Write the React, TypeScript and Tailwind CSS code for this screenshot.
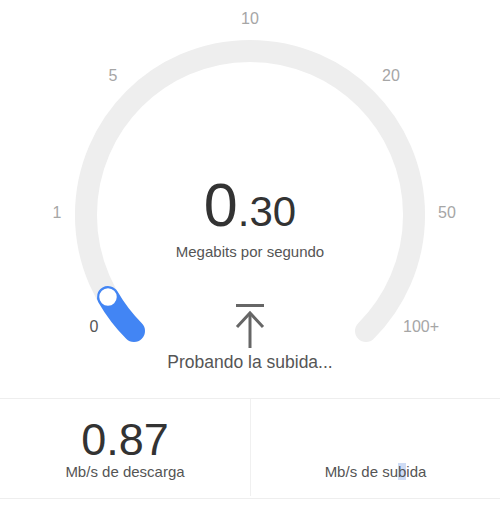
import React from 'react';

const dialLabels = [
  { text: '0', x: 94, y: 327, active: true },
  { text: '1', x: 57, y: 213 },
  { text: '5', x: 113, y: 76 },
  { text: '10', x: 250, y: 19 },
  { text: '20', x: 391, y: 76 },
  { text: '50', x: 447, y: 213 },
  { text: '100+', x: 421, y: 327 },
];

const Gauge: React.FC = () => {
  return (
    <div className="relative h-[398px]">
      <svg className="absolute inset-0" width="500" height="398" viewBox="0 0 500 398">
        <path
          d="M 134 331 A 164 164 0 1 1 366 331"
          fill="none"
          stroke="#eeeeee"
          strokeWidth="22"
          strokeLinecap="round"
        />
        <path
          d="M 134 331 A 164 164 0 0 1 108 297"
          fill="none"
          stroke="#4285f4"
          strokeWidth="22"
          strokeLinecap="round"
        />
        <circle cx="108" cy="297" r="9.5" fill="#ffffff" stroke="#4285f4" strokeWidth="1.5" />
      </svg>

      {dialLabels.map((l) => (
        <span
          key={l.text}
          className={`absolute -translate-x-1/2 -translate-y-1/2 text-[16px] leading-none ${l.active ? 'text-[#555555]' : 'text-[#a6a6a6]'}`}
          style={{ left: l.x, top: l.y }}
        >
          {l.text}
        </span>
      ))}

      <div className="relative flex flex-col items-center pt-[175px]">
        <div className="text-[61px] leading-none text-[#333333]">
          0<span className="text-[42px]">.30</span>
        </div>
        <div className="mt-[8px] text-[15px] leading-none text-[#555555]">Megabits por segundo</div>
        <svg className="mt-[43px]" width="30" height="46" viewBox="0 0 30 46">
          <g stroke="#666666" strokeWidth="3" fill="none">
            <line x1="1" y1="3.5" x2="29" y2="3.5" />
            <line x1="15" y1="11" x2="15" y2="46" />
            <polyline points="2,25 15,11 28,25" />
          </g>
        </svg>
        <div className="mt-[6px] text-[17.5px] leading-none text-[#555555]">Probando la subida...</div>
      </div>
    </div>
  );
};

const App: React.FC = () => {
  return (
    <div className="w-[500px] h-[506px] bg-white overflow-hidden font-['Liberation_Sans',Arial,sans-serif]">
      <Gauge />
      <div className="grid grid-cols-2 h-[101px] border-t border-b border-[#eeeeee]">
        <div className="flex flex-col items-center pt-[21px]">
          <div className="text-[45px] leading-[40px] text-[#333333]">0.87</div>
          <div className="mt-[4px] text-[15px] leading-none text-[#555555]">Mb/s de descarga</div>
        </div>
        <div className="flex flex-col items-center pt-[21px] border-l border-[#f0f0f0] mb-[2px]">
          <div className="text-[45px] leading-[40px] text-[#333333] invisible">0</div>
          <div className="mt-[4px] text-[15px] leading-none text-[#555555]">
            Mb/s de su<span className="bg-[#cfdcf5]">b</span>ida
          </div>
        </div>
      </div>
    </div>
  );
};

export default App;
